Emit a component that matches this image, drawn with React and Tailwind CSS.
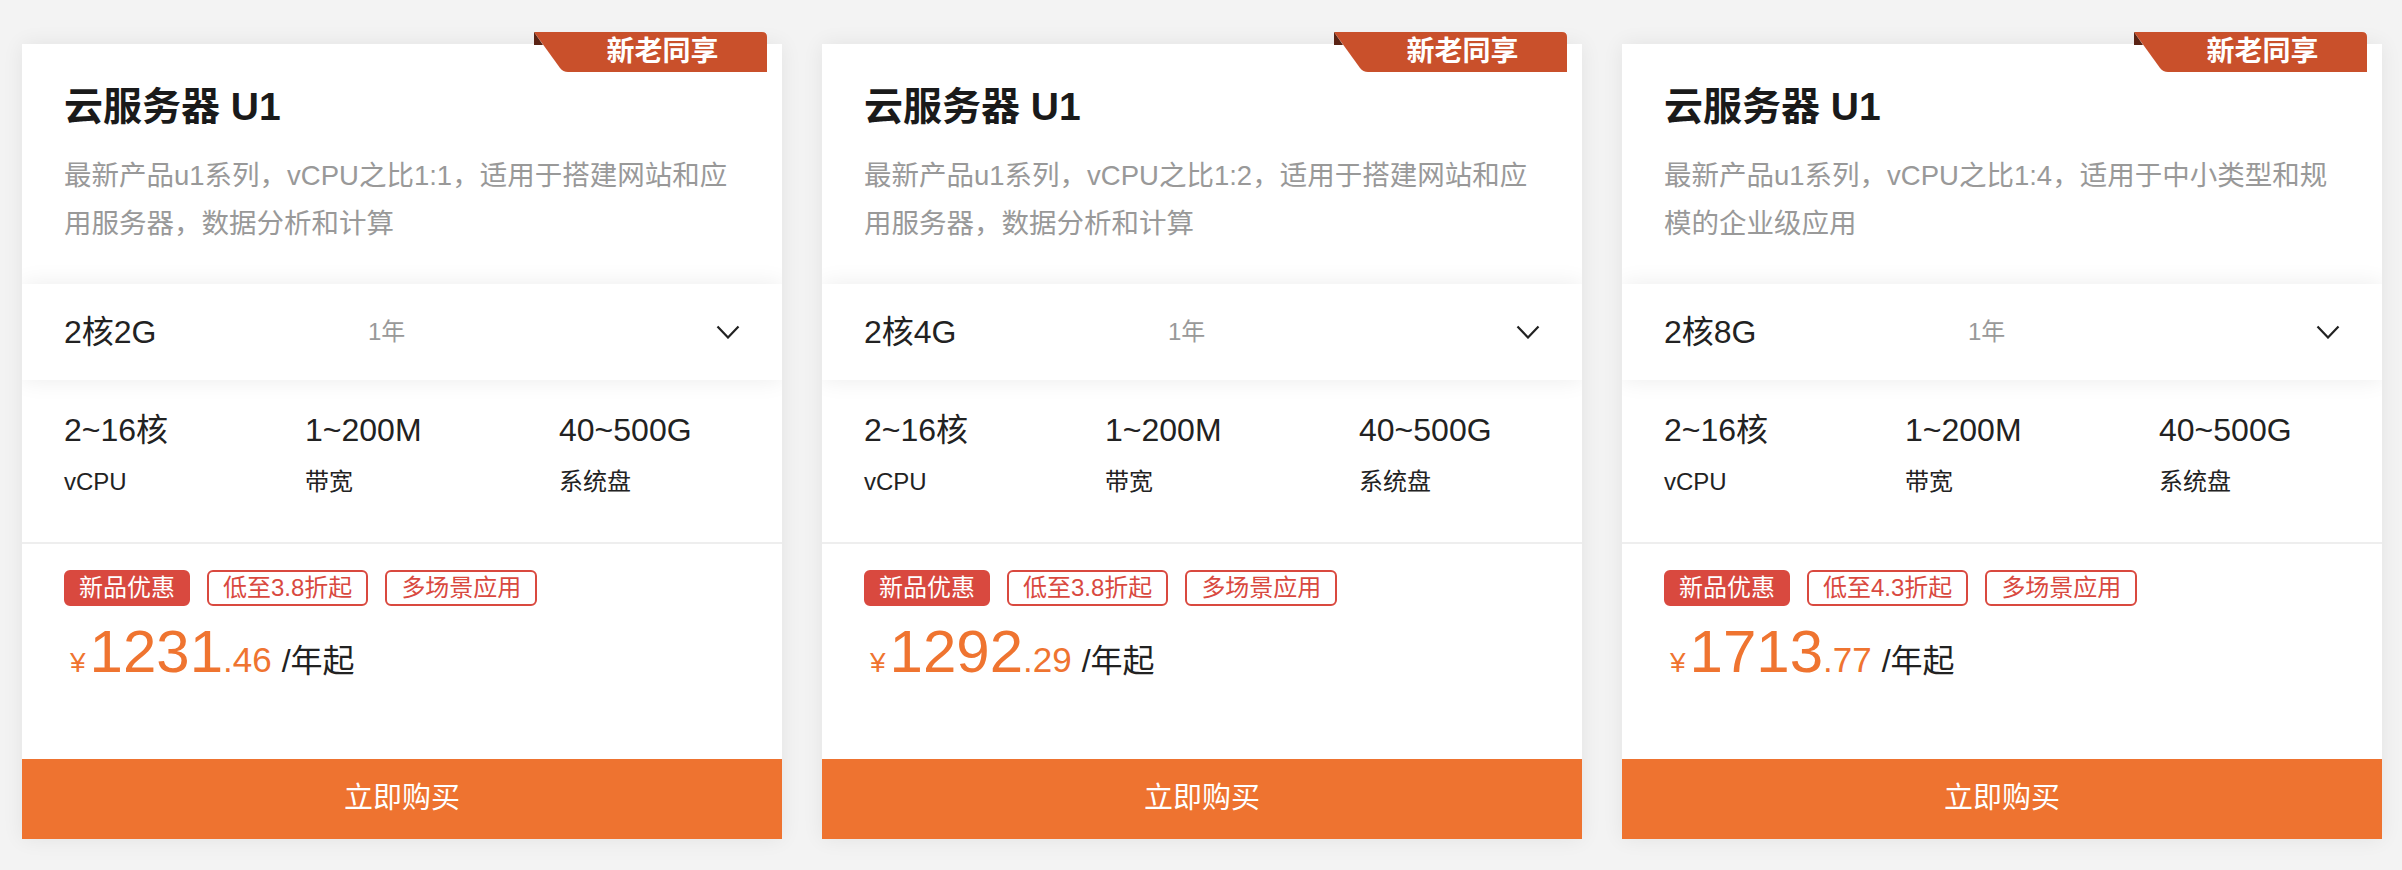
import React from "react";

const cards = [
  {
    desc: ["最新产品u1系列，vCPU之比1:1，适用于搭建网站和应", "用服务器，数据分析和计算"],
    config: "2核2G",
    discount: "低至3.8折起",
    price: "1231",
    cents: ".46",
  },
  {
    desc: ["最新产品u1系列，vCPU之比1:2，适用于搭建网站和应", "用服务器，数据分析和计算"],
    config: "2核4G",
    discount: "低至3.8折起",
    price: "1292",
    cents: ".29",
  },
  {
    desc: ["最新产品u1系列，vCPU之比1:4，适用于中小类型和规", "模的企业级应用"],
    config: "2核8G",
    discount: "低至4.3折起",
    price: "1713",
    cents: ".77",
  },
];

function Badge() {
  return (
    <div className="absolute right-[15px] top-[-12px] w-[233px] h-[40px]">
      <svg width="233" height="40" viewBox="0 0 233 40" className="absolute inset-0">
        <path d="M0 0 L228 0 Q233 0 233 5 L233 40 L34 40 Q29 40 26 36 Z" fill="#c9502b" />
        <path d="M0 0 L0 13 L9 13 Z" fill="#5a2313" />
      </svg>
      <div className="relative h-full pl-[24px] flex items-center justify-center text-white font-bold text-[28px] leading-none">
        新老同享
      </div>
    </div>
  );
}

function Card({ c }) {
  return (
    <div className="relative w-[760px] h-[795px] shadow-[0_0_20px_rgba(0,0,0,0.07)]">
      <div className="h-full bg-white overflow-hidden flex flex-col">
        <div className="h-[240px] shrink-0 px-[42px] pt-[43px]">
          <div className="text-[39px] leading-[40px] font-bold text-[#1a1a1a]">云服务器 U1</div>
          <div className="mt-[25px] text-[27.5px] leading-[48px] text-[#999999] whitespace-nowrap">
            {c.desc[0]}
            <br />
            {c.desc[1]}
          </div>
        </div>
        <div className="relative z-10 h-[96px] shrink-0 px-[42px] flex items-center bg-white shadow-[0_0_22px_rgba(0,0,0,0.08)]">
          <div className="w-[304px] text-[32px] text-[#222222]">{c.config}</div>
          <div className="flex-1 text-[24px] text-[#999999]">1年</div>
          <svg width="24" height="14" viewBox="0 0 24 14">
            <polyline points="1.5,1.5 12,12.5 22.5,1.5" fill="none" stroke="#222222" strokeWidth="2.2" />
          </svg>
        </div>
        <div className="h-[164px] shrink-0 px-[42px] pt-[32px] flex border-b-2 border-[#eeeeee]">
          {[
            ["2~16核", "vCPU", "w-[241px]"],
            ["1~200M", "带宽", "w-[254px]"],
            ["40~500G", "系统盘", "flex-1"],
          ].map(([v, l, w]) => (
            <div key={l} className={w}>
              <div className="text-[32px] leading-[36px] text-[#222222]">{v}</div>
              <div className="mt-[18px] text-[24px] leading-[32px] text-[#222222]">{l}</div>
            </div>
          ))}
        </div>
        <div className="flex-1 px-[42px] pt-[26px]">
          <div className="flex gap-[17px]">
            <span className="h-[36px] px-[13px] rounded-[6px] border-2 border-[#d9493f] bg-[#d9493f] text-white text-[24px] leading-[32px]">
              新品优惠
            </span>
            <span className="h-[36px] px-[14px] rounded-[6px] border-2 border-[#d9493f] bg-white text-[#d9493f] text-[24px] leading-[32px]">
              {c.discount}
            </span>
            <span className="h-[36px] px-[14px] rounded-[6px] border-2 border-[#d9493f] bg-white text-[#d9493f] text-[24px] leading-[32px]">
              多场景应用
            </span>
          </div>
          <div className="mt-[16px] flex items-baseline text-[#ef7430]">
            <span className="text-[28px] leading-none ml-[6px]">¥</span>
            <span className="text-[60px] leading-[60px] ml-[4px]">{c.price}</span>
            <span className="text-[35px] leading-none">{c.cents}</span>
            <span className="text-[32px] leading-none ml-[10px] text-[#222222]">/年起</span>
          </div>
        </div>
        <div className="h-[80px] shrink-0 bg-[#ee7330] flex items-center justify-center text-white text-[29px]">
          立即购买
        </div>
      </div>
      <Badge />
    </div>
  );
}

export default function App() {
  return (
    <div className="min-h-[870px] w-[2402px] bg-[#f3f3f3] pl-[22px] pt-[44px] flex gap-[40px] font-['Liberation_Sans','Noto_Sans_CJK_SC',sans-serif]">
      {cards.map((c, i) => (
        <Card key={i} c={c} />
      ))}
    </div>
  );
}
